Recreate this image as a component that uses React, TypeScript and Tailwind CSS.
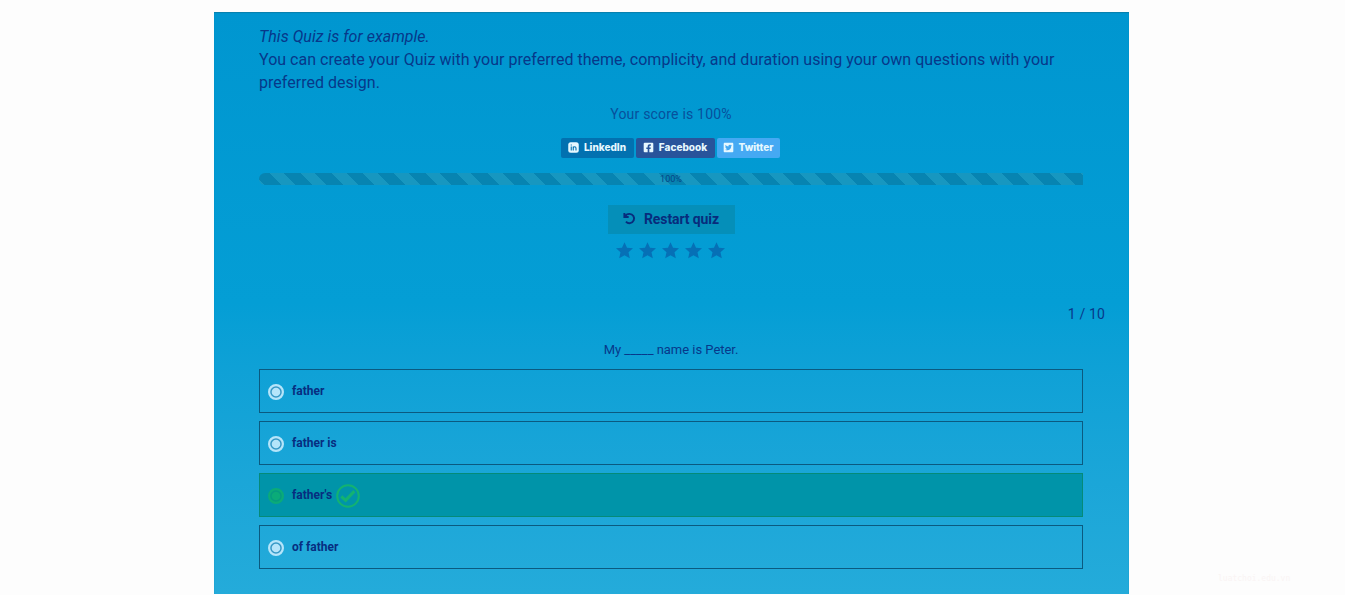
import { FaFacebookSquare, FaTwitterSquare } from 'react-icons/fa';

const answers = [
    { text: 'father', correct: false },
    { text: 'father is', correct: false },
    { text: "father's", correct: true },
    { text: 'of father', correct: false },
];

const shareLinks = [
    { label: 'LinkedIn', Icon: LinkedInIcon, style: 'w-[73px]', color: 'bg-[#0271b0]' },
    { label: 'Facebook', Icon: FaFacebookSquare, style: 'w-[79px]', color: 'bg-[#28549b]' },
    { label: 'Twitter', Icon: FaTwitterSquare, style: 'w-[63px]', color: 'bg-[#45a9f3]' },
];

function LinkedInIcon({ className }: { className?: string }) {
    return (
        <svg viewBox="0 0 22 22" className={className} fill="none">
            <rect x="0.5" y="0.5" width="21" height="21" rx="5" fill="currentColor" />
            <path d="M6.5 9v8M6.5 4.8v2.4M10.5 17V9M10.5 12.5c0-4 5.5-4 5.5 0V17" stroke="#0271b0" strokeWidth="2.2" />
        </svg>
    );
}

function Radio({ correct }: { correct: boolean }) {
    return (
        <svg viewBox="0 0 16 16" className={`mt-px h-4 w-4 ${correct ? 'text-[#0bab78]' : 'text-[#b5e5fa]'}`}>
            <circle cx="8" cy="8" r="6.9" fill={correct ? '#069b80' : '#3598c6'} stroke="currentColor" strokeWidth="2.2" />
            <circle cx="8" cy="8" r="4.3" fill="currentColor" />
        </svg>
    );
}

function CheckCircle() {
    return (
        <svg viewBox="0 0 24 24" className="ml-1 mt-0.5 h-6 w-6" fill="none" stroke="#13b271">
            <circle cx="12" cy="12" r="10.8" strokeWidth="2" />
            <path d="M5.3 12.3l4.3 4 8.8-9.2" strokeWidth="3" />
        </svg>
    );
}

function Star() {
    return (
        <svg viewBox="0 0 17 17" className="h-[17px] w-[17px]" fill="#0670b6">
            <path d="M8.5.2l2.5 5.5 6 .6-4.5 4 1.3 6-5.3-3.1-5.3 3.1 1.3-6L0 6.3l6-.6z" />
        </svg>
    );
}

export default function App() {
    return (
        <div className="flex h-[595px] justify-center overflow-hidden bg-[#fdfdfd] pr-0.5 pt-3 font-['Roboto',sans-serif] text-[#07388a]">
            <div className="h-[582px] w-[915px] bg-linear-to-b from-[#0096d0] via-[#049ed5] to-[#24abda] pl-[45px] pr-[46px] pt-[13px] shadow-[inset_0_1px_1px_#087fab]">
                <div className="text-base leading-[23px] tracking-[0.025px]">
                    <p className="italic">This Quiz is for example.</p>
                    <p>
                        You can create your Quiz with your preferred theme, complicity, and duration using your own questions with your preferred design.
                    </p>
                </div>

                <p className="mt-2.5 text-center text-sm leading-5 tracking-[0.2px] text-[#07509c]">Your score is 100%</p>

                <div className="mt-3.5 flex justify-center gap-0.5 pr-px">
                    {shareLinks.map(({ label, Icon, style, color }) => (
                        <a
                            key={label}
                            className={`flex h-5 items-center justify-center gap-[5px] rounded-[2px] pb-px pr-px font-['Inter',sans-serif] text-[10px] font-extrabold text-[#e6f8ff] ${style} ${color}`}
                        >
                            <Icon className="h-[11px] w-[11px]" />
                            {label}
                        </a>
                    ))}
                </div>

                <div className="mt-[15px] h-3 rounded-l-full bg-[repeating-linear-gradient(45deg,#1797c0_0_3.9px,#0784b1_3.9px_15.7px,#1797c0_15.7px_22.06px)] text-center text-[9px] leading-3 text-[#064585]">
                    100%
                </div>

                <div className="mt-5 flex justify-center">
                    <button className="flex h-[29px] w-[127px] items-center justify-center gap-2 bg-[#058fb9] pb-0.5 text-sm font-bold tracking-[-0.1px] text-[#082c7c]">
                        <svg viewBox="0 0 14 14" className="h-[13px] w-[13px]" fill="none" stroke="currentColor" strokeWidth="2.1">
                            <path d="M1.5 1v4.3h4.6M2 5.1C3 3 4.8 2 7 2a5 5 0 1 1-3.8 8.3" />
                        </svg>
                        Restart quiz
                    </button>
                </div>

                <div className="mt-2 flex justify-center gap-1.5 pr-px">
                    {[1, 2, 3, 4, 5].map((n) => (
                        <Star key={n} />
                    ))}
                </div>

                <p className="-mr-[22px] mt-[45px] text-right text-sm leading-5 tracking-[0.15px]">1 / 10</p>
                <p className="mt-4 text-center text-[13px] leading-5 tracking-[-0.03px]">My _____ name is Peter.</p>

                <div className="mt-[9px] flex flex-col gap-2">
                    {answers.map((answer) => (
                        <div
                            key={answer.text}
                            className={`flex h-11 items-center border pl-2 ${answer.correct ? 'border-[#058b78] bg-[#0094a9]' : 'border-[#0b5a80]'}`}
                        >
                            <Radio correct={answer.correct} />
                            <span className="ml-2 text-xs font-bold text-[#072d80]">{answer.text}</span>
                            {answer.correct && <CheckCircle />}
                        </div>
                    ))}
                </div>
            </div>
            <span className="absolute left-[1218px] top-[573px] font-['DejaVu_Sans_Mono',monospace] text-[8px] text-[#faf4f4]">luatchoi.edu.vn</span>
        </div>
    );
}
